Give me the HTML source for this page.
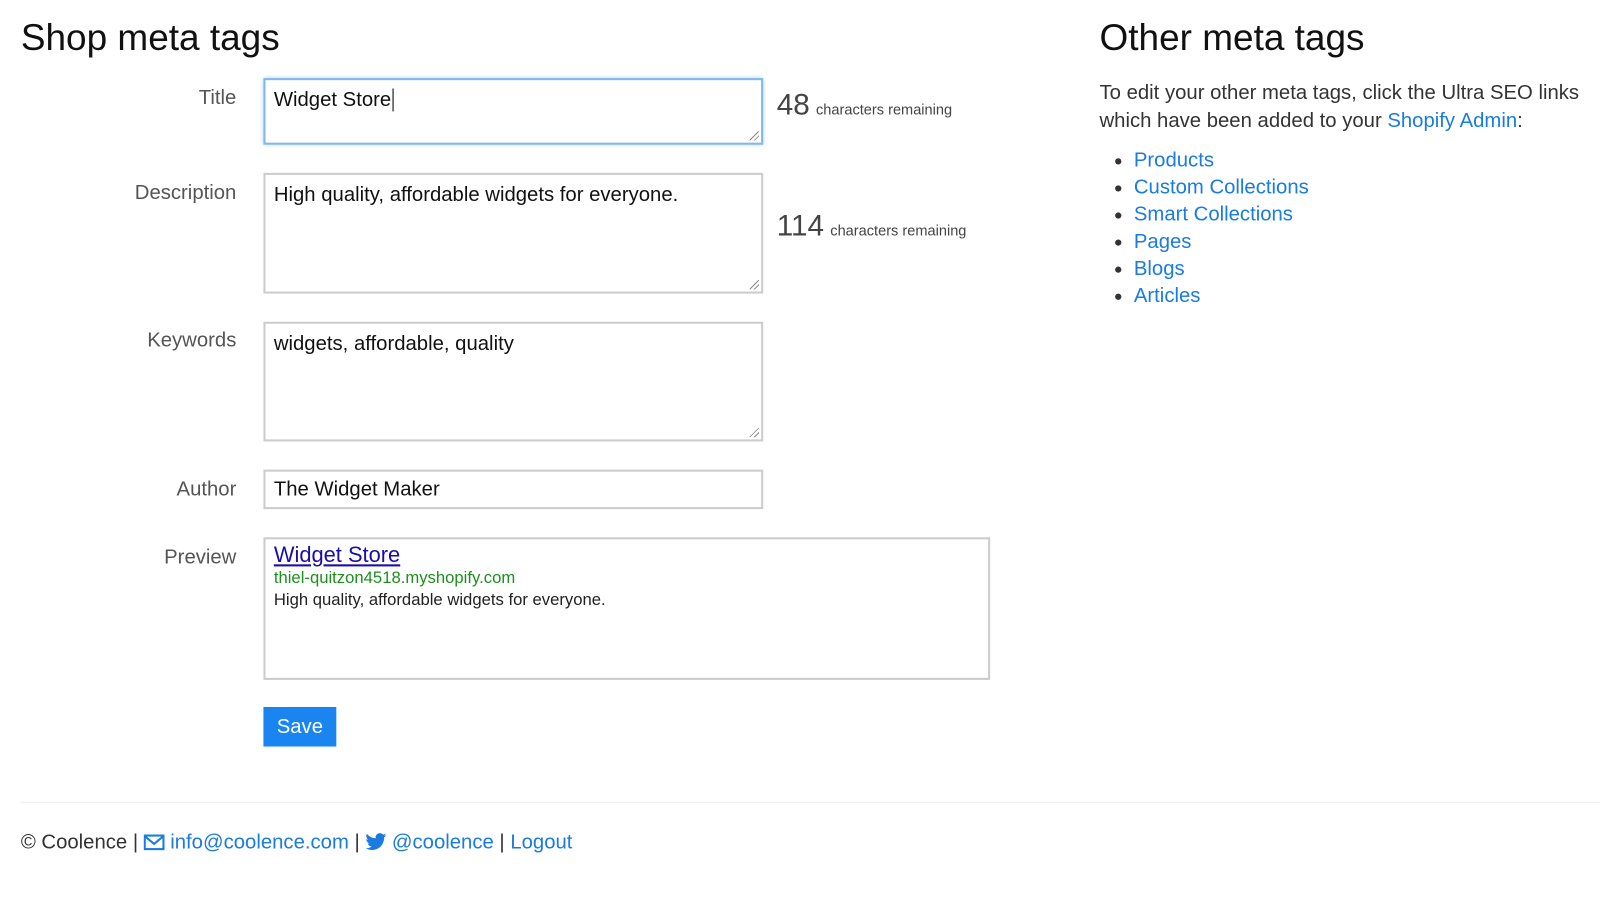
<!DOCTYPE html>
<html><head><meta charset="utf-8"><style>
*{box-sizing:border-box}
body{margin:0;width:1600px;height:900px;background:#fff;font-family:"Liberation Sans",sans-serif;color:#333;overflow:hidden}
#w{position:relative;width:1537px;height:864px;transform:scale(1.0412);transform-origin:0 0}
.a{position:absolute}
h1{position:absolute;margin:0;font-weight:normal;font-size:35.5px;color:#111;line-height:1}
.lbl{position:absolute;right:1310px;font-size:19.5px;color:#555;text-align:right}
.box{position:absolute;left:253px;width:480px;border:2px solid #ccc;background:#fff;font-size:19.5px;color:#111;padding:8px 8px}
.grip{position:absolute;right:2px;bottom:2px;width:9px;height:9px;background:linear-gradient(135deg,transparent 45%,#888 46%,#888 52%,transparent 53%,transparent 70%,#888 71%,#888 77%,transparent 78%)}
.cnt{position:absolute;left:746px;color:#444;font-size:28.5px}
.cnt span{font-size:14px;margin-left:6px}
a{color:#1a7be0;text-decoration:none}
ul{position:absolute;left:1056px;top:141px;margin:0;padding-left:33px;font-size:19.5px;line-height:26px}
</style></head><body><div id="w">
<h1 style="left:20px;top:19px">Shop meta tags</h1>
<h1 style="left:1056px;top:19px">Other meta tags</h1>

<div class="lbl" style="top:83px">Title</div>
<div class="box" style="top:75px;height:64px;border-color:#7fb8ec;box-shadow:0 0 4px #9cc9f2">Widget Store<span style="border-left:1px solid #000;margin-left:1px"></span><div class="grip"></div></div>
<div class="cnt" style="top:85px">48<span>characters remaining</span></div>

<div class="lbl" style="top:174px">Description</div>
<div class="box" style="top:166px;height:116px">High quality, affordable widgets for everyone.<div class="grip"></div></div>
<div class="cnt" style="top:201px">114<span>characters remaining</span></div>

<div class="lbl" style="top:316px">Keywords</div>
<div class="box" style="top:309px;height:115px">widgets, affordable, quality<div class="grip"></div></div>

<div class="lbl" style="top:459px">Author</div>
<div class="box" style="top:451px;height:38px;padding-top:6px">The Widget Maker</div>

<div class="lbl" style="top:524px">Preview</div>
<div class="box" style="top:516px;height:137px;width:698px;padding:4px 8px">
<div style="color:#1a0dab;text-decoration:underline;font-size:21px;line-height:24px">Widget Store</div>
<div style="color:#1e8f1e;font-size:16px;line-height:20px">thiel-quitzon4518.myshopify.com</div>
<div style="color:#222;font-size:16px;line-height:22px">High quality, affordable widgets for everyone.</div>
</div>

<div class="a" style="left:253px;top:679px;width:70px;height:38px;background:#1a84f0;color:#fff;font-size:19.5px;text-align:center;line-height:38px">Save</div>

<div class="a" style="left:20px;top:770px;width:1548px;height:1px;background:#eee"></div>

<div class="a" style="left:20px;top:798px;font-size:19.5px;color:#333;white-space:nowrap">© Coolence | <svg width="20" height="16" viewBox="0 0 20 16" style="vertical-align:-2px"><rect x="1" y="1.5" width="18" height="13" fill="none" stroke="#1a7be0" stroke-width="2"/><path d="M1.5 2.5L10 9.5L18.5 2.5" fill="none" stroke="#1a7be0" stroke-width="2"/></svg> <a>info@coolence.com</a> | <svg width="20" height="17" viewBox="0 0 24 20" style="vertical-align:-2px"><path fill="#1a7be0" d="M24 2.4c-.9.4-1.8.6-2.8.8 1-.6 1.8-1.6 2.2-2.7-1 .6-2 1-3.1 1.2C19.3.7 18 0 16.6 0c-2.7 0-4.9 2.2-4.9 4.9 0 .4 0 .8.1 1.1C7.7 5.8 4.1 3.9 1.7.9c-.4.7-.7 1.6-.7 2.5 0 1.7.9 3.2 2.2 4.1-.8 0-1.6-.2-2.2-.6v.1c0 2.4 1.7 4.4 3.900 4.8-.4.1-.8.2-1.3.2-.3 0-.6 0-.9-.1.6 2 2.4 3.4 4.6 3.4-1.7 1.3-3.8 2.1-6.1 2.1-.4 0-.8 0-1.2-.1 2.2 1.4 4.8 2.2 7.5 2.2 9.1 0 14-7.5 14-14v-.6c1-.7 1.8-1.6 2.5-2.5z"/></svg> <a>@coolence</a> | <a>Logout</a></div>

<div class="a" style="left:1056px;top:76px;font-size:19.5px;line-height:26.5px;color:#333;width:500px">To edit your other meta tags, click the Ultra SEO links which have been added to your <a>Shopify Admin</a>:</div>
<ul><li><a>Products</a></li><li><a>Custom Collections</a></li><li><a>Smart Collections</a></li><li><a>Pages</a></li><li><a>Blogs</a></li><li><a>Articles</a></li></ul>
</div></body></html>
